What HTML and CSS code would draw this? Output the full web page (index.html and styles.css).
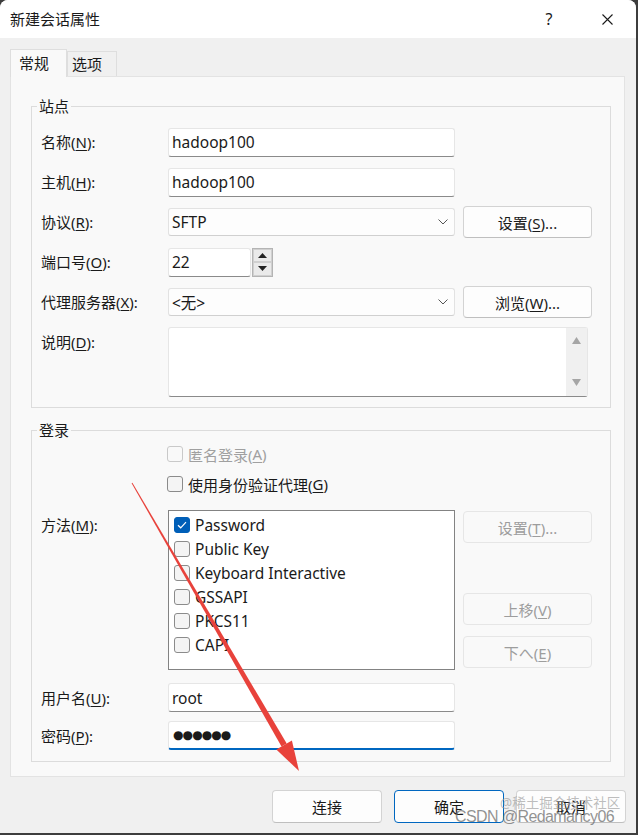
FILE: index.html
```
<!DOCTYPE html>
<html lang="zh-CN">
<head>
    <meta charset="UTF-8">
    <meta name="viewport" content="width=device-width, initial-scale=1.0">
    <title>新建会话属性</title>
    <link rel="stylesheet" href="styles.css">
</head>
<body>
    <div class="window">
        <div class="titlebar">
            <span class="title">新建会话属性</span>
            <span class="help">?</span>
            <svg class="close" width="11" height="11" viewBox="0 0 11 11"><path d="M0.5 0.5 L10.5 10.5 M10.5 0.5 L0.5 10.5" stroke="#1a1a1a" stroke-width="1.1" fill="none"/></svg>
        </div>

        <div class="client">
            <div class="tabs">
                <div class="tab active">常规</div>
                <div class="tab">选项</div>
            </div>

            <div class="page">
                <!-- 站点 -->
                <fieldset class="group">
                    <legend>站点</legend>
                    <div class="field">
                        <div class="label">名称(<u>N</u>):</div>
                        <div class="input">hadoop100</div>
                    </div>
                    <div class="field">
                        <div class="label">主机(<u>H</u>):</div>
                        <div class="input">hadoop100</div>
                    </div>
                    <div class="field">
                        <div class="label">协议(<u>R</u>):</div>
                        <div class="input select">SFTP
                            <svg class="chevron" width="10" height="6" viewBox="0 0 10 6"><path d="M0.5 0.5 L5 5 L9.5 0.5" stroke="#555" stroke-width="1" fill="none"/></svg>
                        </div>
                        <button class="btn side">设置(<u>S</u>)...</button>
                    </div>
                    <div class="field">
                        <div class="label">端口号(<u>O</u>):</div>
                        <div class="input port">22</div>
                        <div class="spin">
                            <div class="spin-btn"><svg width="9" height="5" viewBox="0 0 9 5"><path d="M0 5 L4.5 0 L9 5 Z" fill="#222"/></svg></div>
                            <div class="spin-btn"><svg width="9" height="5" viewBox="0 0 9 5"><path d="M0 0 L4.5 5 L9 0 Z" fill="#222"/></svg></div>
                        </div>
                    </div>
                    <div class="field">
                        <div class="label">代理服务器(<u>X</u>):</div>
                        <div class="input select">&lt;无&gt;
                            <svg class="chevron" width="10" height="6" viewBox="0 0 10 6"><path d="M0.5 0.5 L5 5 L9.5 0.5" stroke="#555" stroke-width="1" fill="none"/></svg>
                        </div>
                        <button class="btn side">浏览(<u>W</u>)...</button>
                    </div>
                    <div class="field memo-row">
                        <div class="label">说明(<u>D</u>):</div>
                        <div class="memo">
                            <div class="scroll">
                                <svg width="9" height="7" viewBox="0 0 9 7"><path d="M0 7 L4.5 0 L9 7 Z" fill="#a5a5a5"/></svg>
                                <svg width="9" height="7" viewBox="0 0 9 7"><path d="M0 0 L4.5 7 L9 0 Z" fill="#a5a5a5"/></svg>
                            </div>
                        </div>
                    </div>
                </fieldset>

                <!-- 登录 -->
                <fieldset class="group login">
                    <legend>登录</legend>
                    <div class="check-row disabled">
                        <span class="cb"></span>匿名登录(<u>A</u>)
                    </div>
                    <div class="check-row agent">
                        <span class="cb"></span>使用身份验证代理(<u>G</u>)
                    </div>
                    <div class="field method">
                        <div class="label">方法(<u>M</u>):</div>
                        <div class="list">
                            <div class="list-item"><span class="cb checked"><svg width="10" height="8" viewBox="0 0 10 8"><path d="M1 4.2 L3.7 6.8 L9 1.2" stroke="#fff" stroke-width="1.2" fill="none"/></svg></span>Password</div>
                            <div class="list-item"><span class="cb"></span>Public Key</div>
                            <div class="list-item"><span class="cb"></span>Keyboard Interactive</div>
                            <div class="list-item"><span class="cb"></span>GSSAPI</div>
                            <div class="list-item"><span class="cb"></span>PKCS11</div>
                            <div class="list-item"><span class="cb"></span>CAPI</div>
                        </div>
                        <div class="side-buttons">
                            <button class="btn side disabled">设置(<u>T</u>)...</button>
                            <button class="btn side disabled up">上移(<u>V</u>)</button>
                            <button class="btn side disabled down">下へ(<u>E</u>)</button>
                        </div>
                    </div>
                    <div class="field user">
                        <div class="label">用户名(<u>U</u>):</div>
                        <div class="input">root</div>
                    </div>
                    <div class="field pass">
                        <div class="label">密码(<u>P</u>):</div>
                        <div class="input focused"><span class="dots">●●●●●●</span></div>
                    </div>
                </fieldset>
            </div>

            <div class="actions">
                <button class="btn action">连接</button>
                <button class="btn action default">确定</button>
                <button class="btn action">取消</button>
            </div>
        </div>

        <!-- 标注箭头 -->
        <svg class="arrow" width="636" height="833" viewBox="0 0 636 833">
            <polygon points="132.4,482.8 131.6,483.2 281.5,746.5 286.7,743.5" fill="#e8423b"/>
            <polygon points="299,771 276.3,749.5 291.9,740.5" fill="#e8423b"/>
        </svg>

        <div class="wm wm-top">@稀土掘金技术社区</div>
        <div class="wm wm-bottom">CSDN @Redamancy06</div>
    </div>
</body>
</html>
```

FILE: styles.css
```
body {
    margin: 0;
    background-color: #3d3d3d;
    font-family: "Noto Sans", "Noto Sans CJK SC", sans-serif;
    font-size: 15px;
    color: #1a1a1a;
}

u {
    text-underline-offset: 2px;
}

.window {
    position: relative;
    width: 636px;
    height: 833px;
    background-color: #f0f0f0;
    border-radius: 8px 8px 0 0;
    overflow: hidden;
    display: flex;
    flex-direction: column;
}

/* 标题栏 */
.titlebar {
    height: 38px;
    background-color: #fff;
    display: flex;
    align-items: center;
    padding-left: 10px;
    flex: none;
}

.title {
    flex: 1;
    line-height: 20px;
}

.help {
    width: 20px;
    text-align: center;
    margin-right: 43px;
    font-size: 16px;
    line-height: 20px;
}

.close {
    margin-right: 23px;
}

.client {
    flex: 1;
    padding: 11px 11px 0 10px;
    display: flex;
    flex-direction: column;
}

/* 选项卡 */
.tabs {
    display: flex;
    height: 27px;
    align-items: flex-end;
}

.tab {
    box-sizing: border-box;
    height: 25px;
    width: 50px;
    padding-left: 4px;
    line-height: 24px;
    border: 1px solid #dedede;
    border-bottom: none;
    background-color: #f0f0f0;
}

.tab.active {
    width: 57px;
    height: 28px;
    padding-left: 8px;
    line-height: 26px;
    margin-bottom: -1px;
    background-color: #f9f9f9;
    position: relative;
    z-index: 1;
}

.page {
    box-sizing: border-box;
    height: 701px;
    border: 1px solid #e3e3e3;
    background-color: #f9f9f9;
    padding: 19px 13px 0 20px;
}

/* 分组框 */
.group {
    margin: 0;
    min-width: 0;
    border: 1px solid #dcdcdc;
    padding: 11px 0 10px 9px;
}

.group legend {
    padding: 0 2px;
    margin-left: -4px;
    line-height: 20px;
}

.group.login {
    margin-top: 12px;
    padding-top: 4px;
    padding-bottom: 11px;
}

.field {
    display: flex;
    align-items: center;
    height: 30px;
    margin-bottom: 10px;
}

.field:last-child {
    margin-bottom: 0;
}

.label {
    width: 127px;
    flex: none;
    line-height: 20px;
}

.input {
    position: relative;
    box-sizing: border-box;
    width: 287px;
    height: 29px;
    background-color: #fff;
    border: 1px solid #e6e6e6;
    border-bottom-color: #8a8a8a;
    border-radius: 3px;
    padding-left: 3px;
    display: flex;
    align-items: center;
    font-size: 15.5px;
    flex: none;
}

.input.select {
    height: 28px;
    background-color: #fdfdfd;
    border-color: #e2e2e2;
    border-bottom-color: #d0d0d0;
}

.chevron {
    margin-left: auto;
    margin-right: 6px;
}

.input.port {
    width: 83px;
}

.spin {
    box-sizing: border-box;
    width: 21px;
    height: 29px;
    margin-left: 1px;
    border: 1px solid #b4b4b4;
    display: flex;
    flex-direction: column;
}

.spin-btn {
    flex: 1;
    background-color: #eaeaea;
    border: 1px solid #d0d0d0;
    display: flex;
    align-items: center;
    justify-content: center;
}

.memo-row {
    height: 70px;
    align-items: flex-start;
}

.memo-row .label {
    line-height: 30px;
}

.memo {
    box-sizing: border-box;
    width: 420px;
    height: 70px;
    background-color: #fff;
    border: 1px solid #e6e6e6;
    border-bottom-color: #8a8a8a;
    border-radius: 3px;
    display: flex;
    justify-content: flex-end;
}

.scroll {
    width: 21px;
    background-color: #f0f0f0;
    display: flex;
    flex-direction: column;
    align-items: center;
    justify-content: space-between;
    padding: 9px 0 10px;
}

/* 按钮 */
.btn {
    box-sizing: border-box;
    height: 32px;
    border: 1px solid #d3d3d3;
    border-bottom-color: #bfbfbf;
    border-radius: 4px;
    background-color: #fdfdfd;
    font-family: inherit;
    font-size: 15px;
    color: #1a1a1a;
    padding: 0;
    cursor: pointer;
}

.btn.side {
    width: 129px;
    margin-left: 8px;
    margin-top: -1px;
    margin-bottom: -1px;
    flex: none;
}

.btn.disabled {
    color: #9d9d9d;
    background-color: #f9f9f9;
    border-color: #e6e6e6;
}

/* 复选框 */
.check-row {
    display: flex;
    align-items: center;
    height: 20px;
    padding-left: 126px;
}

.check-row.agent {
    margin-top: 10px;
}

.check-row.disabled {
    color: #a0a0a0;
}

.cb {
    box-sizing: border-box;
    width: 16px;
    height: 16px;
    border: 1px solid #8b8b8b;
    border-radius: 3px;
    background-color: #f4f4f4;
    margin-right: 5px;
    flex: none;
    display: flex;
    align-items: center;
    justify-content: center;
}

.check-row.disabled .cb {
    border-color: #c9c9c9;
    background-color: #f9f9f9;
}

.cb.checked {
    background-color: #005fb8;
    border-color: #005fb8;
}

.field.method {
    height: auto;
    align-items: flex-start;
    margin-top: 16px;
    margin-bottom: 13px;
}

.method .label {
    line-height: 30px;
}

.list {
    box-sizing: border-box;
    width: 287px;
    height: 160px;
    border: 1px solid #838383;
    background-color: #fff;
    padding: 2px 0 0 5px;
    flex: none;
}

.list-item {
    height: 24px;
    display: flex;
    align-items: center;
    font-size: 15.5px;
}

.side-buttons {
    display: flex;
    flex-direction: column;
}

.side-buttons .btn {
    margin-top: 1px;
    margin-bottom: 0;
}

.side-buttons .up {
    margin-top: 50px;
}

.side-buttons .down {
    margin-top: 11px;
}

.field.user {
    height: 29px;
    margin-bottom: 9px;
}

.field.pass {
    height: 29px;
}

.input.focused {
    border-bottom: 2px solid #0067c0;
}

.dots {
    font-family: "DejaVu Sans", sans-serif;
    font-size: 12px;
    letter-spacing: -0.9px;
    padding-left: 1px;
}

/* 底部按钮 */
.actions {
    display: flex;
    justify-content: flex-end;
    gap: 12px;
    margin-top: 13px;
    margin-right: -1px;
}

.btn.action {
    width: 110px;
    height: 33px;
}

.btn.action.default {
    border: 1px solid #0067c0;
}

/* 标注与水印 */
.arrow {
    position: absolute;
    left: 0;
    top: 0;
    pointer-events: none;
}

.wm {
    position: absolute;
    white-space: nowrap;
    pointer-events: none;
}

.wm-top {
    left: 500px;
    top: 794px;
    font-size: 13.5px;
    line-height: 18px;
    color: rgba(160, 160, 160, 0.7);
}

.wm-bottom {
    left: 455px;
    top: 807px;
    font-family: "Liberation Sans", sans-serif;
    font-size: 16px;
    letter-spacing: -0.6px;
    line-height: 20px;
    color: rgba(110, 110, 110, 0.75);
}
```
